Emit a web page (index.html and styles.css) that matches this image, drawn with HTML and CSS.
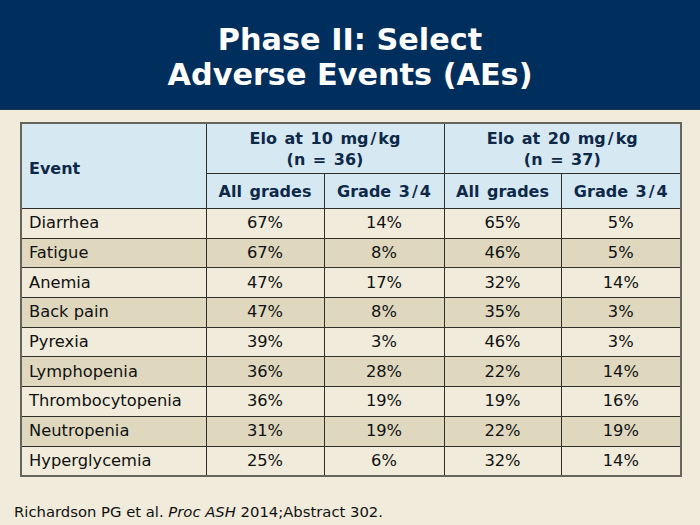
FILE: index.html
```html
<!DOCTYPE html>
<html>
<head>
<meta charset="utf-8">
<link rel="stylesheet" href="styles.css">
</head>
<body>
<div class="slide">
  <header class="title-bar">
    <h1>Phase II: Select<br>Adverse Events (AEs)</h1>
  </header>
  <main class="content">
    <table class="ae">
      <colgroup>
        <col class="c-event"><col class="c-a"><col class="c-b"><col class="c-c"><col class="c-d">
      </colgroup>
      <thead>
        <tr class="h1">
          <th rowspan="2" class="event-h">Event</th>
          <th colspan="2">Elo at 10 mg<span class="sl">/</span>kg<br>(n = 36)</th>
          <th colspan="2">Elo at 20 mg<span class="sl">/</span>kg<br>(n = 37)</th>
        </tr>
        <tr class="h2">
          <th>All grades</th><th>Grade 3<span class="sl">/</span>4</th><th>All grades</th><th>Grade 3<span class="sl">/</span>4</th>
        </tr>
      </thead>
      <tbody>
        <tr><td>Diarrhea</td><td>67%</td><td>14%</td><td>65%</td><td>5%</td></tr>
        <tr><td>Fatigue</td><td>67%</td><td>8%</td><td>46%</td><td>5%</td></tr>
        <tr><td>Anemia</td><td>47%</td><td>17%</td><td>32%</td><td>14%</td></tr>
        <tr><td>Back pain</td><td>47%</td><td>8%</td><td>35%</td><td>3%</td></tr>
        <tr><td>Pyrexia</td><td>39%</td><td>3%</td><td>46%</td><td>3%</td></tr>
        <tr><td>Lymphopenia</td><td>36%</td><td>28%</td><td>22%</td><td>14%</td></tr>
        <tr><td>Thrombocytopenia</td><td>36%</td><td>19%</td><td>19%</td><td>16%</td></tr>
        <tr><td>Neutropenia</td><td>31%</td><td>19%</td><td>22%</td><td>19%</td></tr>
        <tr><td>Hyperglycemia</td><td>25%</td><td>6%</td><td>32%</td><td>14%</td></tr>
      </tbody>
    </table>
    <p class="ref">Richardson PG et al. <em>Proc ASH</em> 2014;Abstract 302.</p>
  </main>
</div>
</body>
</html>
```
FILE: styles.css
```css
html, body {
  margin: 0;
  padding: 0;
}
body {
  width: 700px;
  height: 525px;
  background: #F0EBDA;
  font-family: "DejaVu Sans", Verdana, sans-serif;
  overflow: hidden;
}
.slide {
  width: 700px;
  height: 525px;
  display: flex;
  flex-direction: column;
}
.title-bar {
  background: #002E5D;
  height: 110px;
  display: flex;
  align-items: center;
  justify-content: center;
  border-bottom: 1px solid #1c3550;
  box-sizing: border-box;
}
.title-bar h1 {
  margin: 0;
  color: #ffffff;
  font-family: "DejaVu Sans", sans-serif;
  font-weight: bold;
  font-size: 30.3px;
  line-height: 35px;
  text-align: center;
  padding-top: 5px;
}
.content {
  padding: 12px 0 0 20px;
}
.ae {
  border-collapse: collapse;
  border: 2px solid #66655c;
  width: 660px;
  table-layout: fixed;
  font-size: 16.3px;
  color: #111;
}
.c-event { width: 185px; }
.c-a { width: 118px; }
.c-b { width: 120px; }
.c-c { width: 117px; }
.c-d { width: 120px; }
.ae th, .ae td {
  border: 1px solid #2e2e2a;
  padding: 0;
}
.ae th {
  background: #D6E9F2;
  color: #0E2848;
  font-weight: bold;
  text-align: center;
  font-size: 16px;
  word-spacing: 2px;
}
.ae th .sl {
  padding: 0 2px;
}
.ae tr.h1 th {
  height: 49px;
  line-height: 21px;
  vertical-align: middle;
}
.ae tr.h2 th {
  height: 34px;
}
.ae th.event-h {
  text-align: left;
  padding-left: 7px;
  padding-top: 4px;
}
.ae td {
  height: 28.7px;
  text-align: center;
  line-height: 20px;
}
.ae td:first-child {
  text-align: left;
  padding-left: 7px;
}
.ae tbody tr:nth-child(odd) td { background: #F0EBDA; }
.ae tbody tr:nth-child(even) td { background: #DFD8BF; }
.ref {
  margin: 26px 0 0 -6px;
  font-size: 14.8px;
  color: #111;
}
```
